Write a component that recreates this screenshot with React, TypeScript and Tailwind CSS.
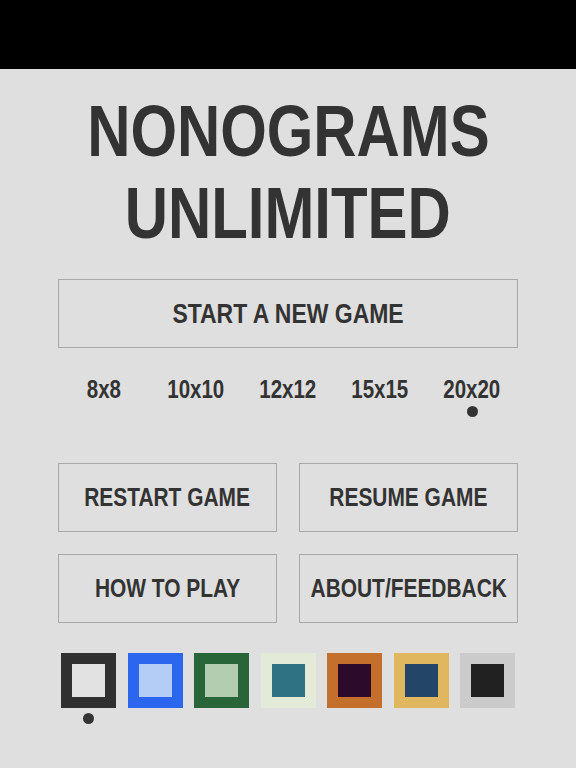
import React from "react";

const font = { fontFamily: '"Liberation Sans", Arial, sans-serif' };

const sizes = ["8x8", "10x10", "12x12", "15x15", "20x20"];
const swatches = [
  { outer: "bg-[#303030]", inner: "bg-[#e2e2e2]" },
  { outer: "bg-[#2d66ee]", inner: "bg-[#b3cdf7]" },
  { outer: "bg-[#28663a]", inner: "bg-[#b3cdb0]" },
  { outer: "bg-[#e3ead8]", inner: "bg-[#2f7283]" },
  { outer: "bg-[#c4702c]", inner: "bg-[#2b0a2b]" },
  { outer: "bg-[#e0b65e]", inner: "bg-[#234668]" },
  { outer: "bg-[#cbcbcb]", inner: "bg-[#212121]" },
];

function N({ children }: { children: React.ReactNode }) {
  return <span className="inline-block whitespace-nowrap scale-x-[0.82]">{children}</span>;
}

export default function App() {
  return (
    <div className="w-[576px] h-[768px] bg-[#dfdfdf] text-[#333333] overflow-hidden" style={font}>
      <div className="h-[69px] bg-black" />
      <h1 className="mt-[21px] flex flex-col items-center font-bold text-[73px] leading-[82px]">
        <N>NONOGRAMS</N>
        <N>UNLIMITED</N>
      </h1>
      <div className="ml-[58px] w-[460px]">
        <button className="mt-[25px] w-full h-[69px] border border-[#a8a8a8] flex items-center justify-center font-bold text-[28px]">
          <N>START A NEW GAME</N>
        </button>
        <div className="mt-[29px] grid grid-cols-5">
          {sizes.map((s, i) => (
            <div key={s} className="flex flex-col items-center">
              <span className="font-bold text-[25px] leading-[24px]">
                <N>{s}</N>
              </span>
              <span className={`mt-[5px] w-[11px] h-[11px] rounded-full ${i === 4 ? "bg-[#333333]" : "bg-transparent"}`} />
            </div>
          ))}
        </div>
        <div className="mt-[46px] grid grid-cols-2 gap-[22px]">
          {["RESTART GAME", "RESUME GAME", "HOW TO PLAY", "ABOUT/FEEDBACK"].map((t) => (
            <button key={t} className="h-[69px] border border-[#a8a8a8] flex items-center justify-center font-bold text-[25.5px]">
              <N>{t}</N>
            </button>
          ))}
        </div>
        <div className="mt-[30px] mx-[3px] flex justify-between">
          {swatches.map((s, i) => (
            <div key={i} className="flex flex-col items-center">
              <div className={`w-[55px] h-[55px] p-[11px] flex ${s.outer}`}>
                <div className={`flex-1 ${s.inner}`} />
              </div>
              <span className={`mt-[5px] w-[11px] h-[11px] rounded-full ${i === 0 ? "bg-[#333333]" : "bg-transparent"}`} />
            </div>
          ))}
        </div>
      </div>
    </div>
  );
}
